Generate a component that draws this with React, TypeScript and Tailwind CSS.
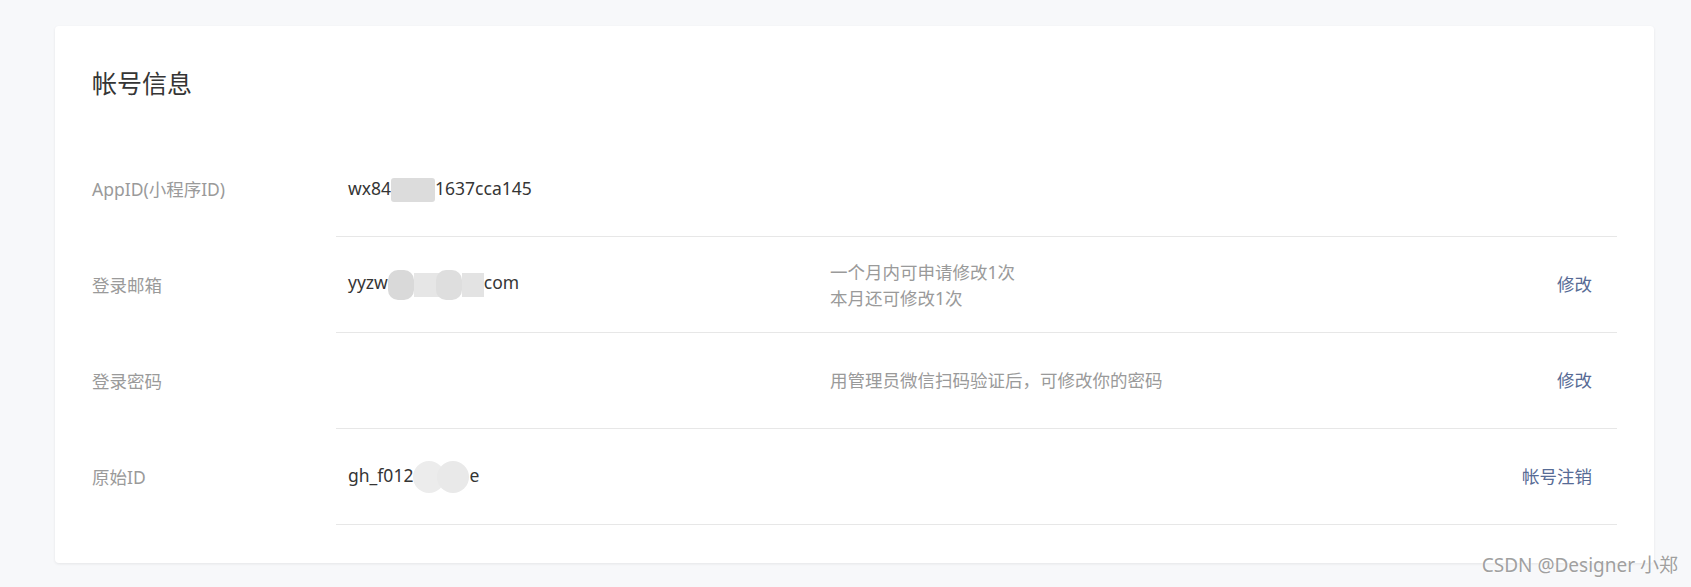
import React from "react";

const font = { fontFamily: '"Noto Sans", "Noto Sans CJK SC", sans-serif' };

function Blur({ w, round = false, tone = "bg-[#dcdcdc]" }: { w: number; round?: boolean; tone?: string }) {
  return (
    <span
      className={`inline-block h-[24px] align-middle ${tone} ${round ? "rounded-full" : "rounded-[3px]"}`}
      style={{ width: w }}
    />
  );
}

type Row = {
  label: string;
  value?: React.ReactNode;
  hint?: React.ReactNode;
  action?: string;
};

const rows: Row[] = [
  {
    label: "AppID(小程序ID)",
    value: (
      <>
        wx84
        <Blur w={44} />
        1637cca145
      </>
    ),
  },
  {
    label: "登录邮箱",
    value: (
      <>
        yyzw
        <span className="inline-flex items-center align-middle">
          <span className="inline-block h-[30px] w-[26px] rounded-[10px] bg-[#d9d9d9]" />
          <span className="inline-block h-[24px] w-[26px] bg-[#e6e6e6]" />
          <span className="-ml-[4px] inline-block h-[30px] w-[26px] rounded-[10px] bg-[#dedede]" />
          <span className="inline-block h-[24px] w-[22px] bg-[#e3e3e3]" />
        </span>
        com
      </>
    ),
    hint: (
      <div className="leading-[26px]">
        <div>一个月内可申请修改1次</div>
        <div>本月还可修改1次</div>
      </div>
    ),
    action: "修改",
  },
  {
    label: "登录密码",
    hint: "用管理员微信扫码验证后，可修改你的密码",
    action: "修改",
  },
  {
    label: "原始ID",
    value: (
      <>
        gh_f012
        <span className="inline-flex items-center align-middle">
          <span className="inline-block h-[32px] w-[32px] rounded-full bg-[#ececec]" />
          <span className="-ml-[8px] inline-block h-[32px] w-[32px] rounded-full bg-[#e9e9e9]" />
        </span>
        e
      </>
    ),
    action: "帐号注销",
  },
];

export default function App() {
  return (
    <div className="relative min-h-[587px] bg-[#f7f8fa] pl-[55px] pr-[37px] pt-[26px]" style={font}>
      <div className="rounded-[4px] bg-white px-[37px] pb-[38px] pt-[39px] shadow-[0_1px_3px_rgba(0,0,0,0.08)]">
        <h1 className="mb-[40px] text-[25px] leading-[36px] font-normal text-[#353535]">帐号信息</h1>
        <div>
          {rows.map((r) => (
            <div key={r.label} className="flex">
              <div className="flex w-[244px] items-center text-[17.5px] text-[#9a9a9a]">{r.label}</div>
              <div className="flex h-[96px] flex-1 items-center border-b border-[#e7e7e7] pl-[12px] pr-[25px] text-[17.5px]">
                <div className="w-[482px] text-[#353535]">{r.value}</div>
                <div className="flex-1 text-[#9a9a9a]">{r.hint}</div>
                {r.action && <a className="cursor-pointer text-[#576b95]">{r.action}</a>}
              </div>
            </div>
          ))}
        </div>
      </div>
      <div
        className="absolute bottom-[8px] right-[13px] text-[19px] text-[#a0a0a0]"
        style={{ textShadow: "0 0 2px #fff, 0 0 2px #fff" }}
      >
        CSDN @Designer 小郑
      </div>
    </div>
  );
}
